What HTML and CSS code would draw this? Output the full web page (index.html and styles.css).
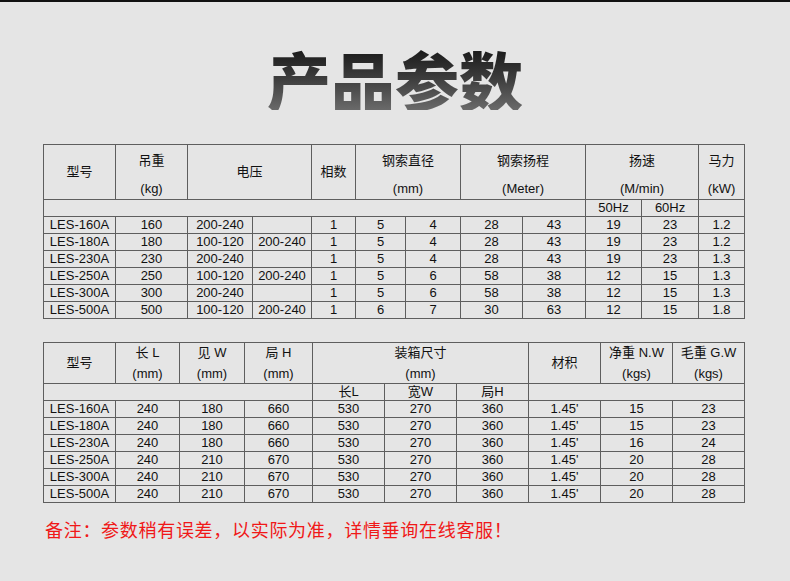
FILE: index.html
```html
<!DOCTYPE html>
<html lang="zh-CN">
<head>
<meta charset="utf-8">
<title>产品参数</title>
<link rel="stylesheet" href="styles.css">
</head>
<body>
<div class="topline"></div>
<h1 class="title">产品参数</h1>

<table class="spec t1">
  <colgroup>
    <col class="c72"><col class="c72"><col class="c65"><col class="c59"><col class="c44"><col class="c50">
    <col class="c55"><col class="c62"><col class="c63"><col class="c56"><col class="c57"><col class="c46">
  </colgroup>
  <tr class="head">
    <td>型号</td>
    <td class="two"><div>吊重</div><div class="l2">(kg)</div></td>
    <td colspan="2">电压</td>
    <td>相数</td>
    <td colspan="2" class="two"><div>钢索直径</div><div class="l2">(mm)</div></td>
    <td colspan="2" class="two"><div>钢索扬程</div><div class="l2">(Meter)</div></td>
    <td colspan="2" class="two"><div>扬速</div><div class="l2">(M/min)</div></td>
    <td class="two"><div>马力</div><div class="l2">(kW)</div></td>
  </tr>
  <tr class="sub">
    <td colspan="9"></td>
    <td>50Hz</td>
    <td>60Hz</td>
    <td></td>
  </tr>
  <tr><td>LES-160A</td><td>160</td><td>200-240</td><td></td><td>1</td><td>5</td><td>4</td><td>28</td><td>43</td><td>19</td><td>23</td><td>1.2</td></tr>
  <tr><td>LES-180A</td><td>180</td><td>100-120</td><td>200-240</td><td>1</td><td>5</td><td>4</td><td>28</td><td>43</td><td>19</td><td>23</td><td>1.2</td></tr>
  <tr><td>LES-230A</td><td>230</td><td>200-240</td><td></td><td>1</td><td>5</td><td>4</td><td>28</td><td>43</td><td>19</td><td>23</td><td>1.3</td></tr>
  <tr><td>LES-250A</td><td>250</td><td>100-120</td><td>200-240</td><td>1</td><td>5</td><td>6</td><td>58</td><td>38</td><td>12</td><td>15</td><td>1.3</td></tr>
  <tr><td>LES-300A</td><td>300</td><td>200-240</td><td></td><td>1</td><td>5</td><td>6</td><td>58</td><td>38</td><td>12</td><td>15</td><td>1.3</td></tr>
  <tr><td>LES-500A</td><td>500</td><td>100-120</td><td>200-240</td><td>1</td><td>6</td><td>7</td><td>30</td><td>63</td><td>12</td><td>15</td><td>1.8</td></tr>
</table>

<table class="spec t2">
  <colgroup>
    <col class="c72"><col class="c64"><col class="c65"><col class="c68"><col class="c72"><col class="c72">
    <col class="c72"><col class="c72"><col class="c72"><col class="c72">
  </colgroup>
  <tr class="head">
    <td>型号</td>
    <td class="two"><div>长 L</div><div class="l2">(mm)</div></td>
    <td class="two"><div>见 W</div><div class="l2">(mm)</div></td>
    <td class="two"><div>局 H</div><div class="l2">(mm)</div></td>
    <td colspan="3" class="two"><div>装箱尺寸</div><div class="l2">(mm)</div></td>
    <td>材积</td>
    <td class="two"><div>净重 N.W</div><div class="l2">(kgs)</div></td>
    <td class="two"><div>毛重 G.W</div><div class="l2">(kgs)</div></td>
  </tr>
  <tr class="sub">
    <td colspan="4"></td>
    <td>长L</td>
    <td>宽W</td>
    <td>局H</td>
    <td colspan="3"></td>
  </tr>
  <tr><td>LES-160A</td><td>240</td><td>180</td><td>660</td><td>530</td><td>270</td><td>360</td><td>1.45'</td><td>15</td><td>23</td></tr>
  <tr><td>LES-180A</td><td>240</td><td>180</td><td>660</td><td>530</td><td>270</td><td>360</td><td>1.45'</td><td>15</td><td>23</td></tr>
  <tr><td>LES-230A</td><td>240</td><td>180</td><td>660</td><td>530</td><td>270</td><td>360</td><td>1.45'</td><td>16</td><td>24</td></tr>
  <tr><td>LES-250A</td><td>240</td><td>210</td><td>670</td><td>530</td><td>270</td><td>360</td><td>1.45'</td><td>20</td><td>28</td></tr>
  <tr><td>LES-300A</td><td>240</td><td>210</td><td>670</td><td>530</td><td>270</td><td>360</td><td>1.45'</td><td>20</td><td>28</td></tr>
  <tr><td>LES-500A</td><td>240</td><td>210</td><td>670</td><td>530</td><td>270</td><td>360</td><td>1.45'</td><td>20</td><td>28</td></tr>
</table>

<p class="note">备注：参数稍有误差，以实际为准，详情垂询在线客服！</p>
</body>
</html>
```

FILE: styles.css
```css
html, body {
  margin: 0;
  padding: 0;
  background: #e5e5e5;
}
body {
  width: 790px;
  height: 581px;
  overflow: hidden;
  font-family: "Liberation Sans", Arial, "Noto Sans CJK SC", sans-serif;
  color: #111;
}
.topline {
  height: 2px;
  background: #111;
}
.title {
  margin: 44px 0 0 0;
  height: 64px;
  font-family: "Noto Sans CJK SC", sans-serif;
  font-weight: 900;
  font-size: 64px;
  line-height: 64px;
  text-align: center;
  background: linear-gradient(to bottom, #161616 0%, #3c3c3c 50%, #6a6a6a 100%);
  -webkit-background-clip: text;
  background-clip: text;
  color: transparent;
}
.spec {
  border-collapse: collapse;
  table-layout: fixed;
  width: 702px;
  margin-left: 43px;
  font-size: 13px;
}
.t1 { margin-top: 34px; }
.t2 { margin-top: 23px; }
.spec td {
  border: 1px solid #5e5e5e;
  padding: 0;
  height: 16px;
  line-height: 16px;
  text-align: center;
  vertical-align: middle;
  white-space: nowrap;
  overflow: hidden;
}
.t1 .head td { height: 54px; }
.t1 .head td.two {
  vertical-align: top;
  padding-top: 6px;
  height: 48px;
}
.t1 .head td.two div { line-height: 20px; }
.t1 .head td.two .l2 { margin-top: 8px; }

.t2 .head td { height: 40px; }
.t2 .head td.two { vertical-align: top; }
.t2 .head td.two div { line-height: 19px; }
.t2 .head td.two .l2 { margin-top: 2px; }

.c72 { width: 72px; }
.c65 { width: 65px; }
.c59 { width: 59px; }
.c44 { width: 44px; }
.c50 { width: 50px; }
.c55 { width: 55px; }
.c62 { width: 62px; }
.c63 { width: 63px; }
.c56 { width: 56px; }
.c57 { width: 57px; }
.c46 { width: 46px; }
.c64 { width: 64px; }
.c68 { width: 68px; }

.note {
  margin: 14px 0 0 45px;
  font-family: "Noto Sans CJK SC", sans-serif;
  font-size: 18px;
  line-height: 24px;
  letter-spacing: 0.7px;
  color: #f01818;
}
```
